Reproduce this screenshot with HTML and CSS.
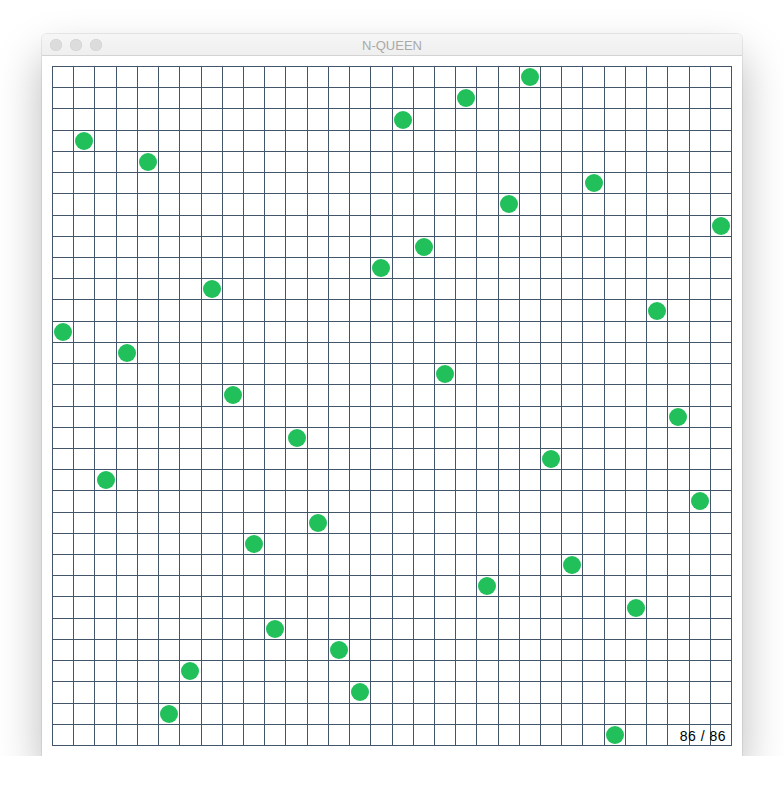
FILE: index.html
```html
<!DOCTYPE html>
<html>
<head>
  <title>N-QUEEN</title>
  <link rel="stylesheet" href="styles.css">
</head>
<body>

  <div class="window">
    <div class="titlebar">
      <div class="lights">
        <span class="light"></span>
        <span class="light"></span>
        <span class="light"></span>
      </div>
      <div class="title">N-QUEEN</div>
    </div>

    <div class="content">
      <div class="board" id="board">
        <!-- cells are added by the script -->
      </div>
      <div class="counter">86 / 86</div>
    </div>
  </div>

  <script>
    // column of the queen in each row
    const queens = [22, 19, 16, 1, 4, 25, 21, 31, 17, 15, 7, 28, 0, 3, 18, 8,
                    29, 11, 23, 2, 30, 12, 9, 24, 20, 27, 10, 13, 6, 14, 5, 26];
    const size = queens.length;

    function renderBoard() {
      const board = document.getElementById("board");
      let html = "";
      for (let r = 0; r < size; r++) {
        for (let c = 0; c < size; c++) {
          const queen = queens[r] === c ? '<span class="queen"></span>' : "";
          html += `<div class="cell">${queen}</div>`;
        }
      }
      board.innerHTML = html;
    }

    renderBoard();
  </script>

</body>
</html>
```

FILE: styles.css
```css
body {
  margin: 0;
  padding: 34px 0 0 42px;
  background: #ffffff;
  font-family: "Liberation Sans", Arial, sans-serif;
}

.window {
  width: 700px;
  height: 722px;
  background: #ffffff;
  border-radius: 5px 5px 0 0;
  box-shadow: 0 0 0 1px rgba(0, 0, 0, 0.07), 0 22px 45px rgba(0, 0, 0, 0.28);
  overflow: hidden;
}

.titlebar {
  position: relative;
  height: 21px;
  background: linear-gradient(#f6f6f6, #efefef);
  border-bottom: 1px solid #d3d3d3;
  display: flex;
  align-items: center;
  justify-content: center;
}

.lights {
  position: absolute;
  left: 8px;
  top: 5px;
  display: flex;
  gap: 8px;
}

.light {
  width: 12px;
  height: 12px;
  border-radius: 50%;
  background: #dcdcdc;
  box-shadow: inset 0 0 0 0.5px #d0d0d0;
}

.title {
  font-size: 13px;
  color: #a9a9a9;
  padding-top: 1px;
}

.content {
  position: relative;
  padding: 10px;
}

.board {
  width: 680px;
  height: 680px;
  display: grid;
  grid-template-columns: repeat(32, 1fr);
  grid-template-rows: repeat(32, 1fr);
  box-sizing: border-box;
  border-left: 1px solid #435669;
  border-top: 1px solid #435669;
}

.cell {
  border-right: 1px solid #435669;
  border-bottom: 1px solid #435669;
  display: flex;
  align-items: center;
  justify-content: center;
}

.queen {
  width: 18px;
  height: 18px;
  border-radius: 50%;
  background: #21c05b;
}

.counter {
  position: absolute;
  right: 16px;
  bottom: 12px;
  font-size: 14px;
  letter-spacing: 0.5px;
  color: #000000;
}
```
